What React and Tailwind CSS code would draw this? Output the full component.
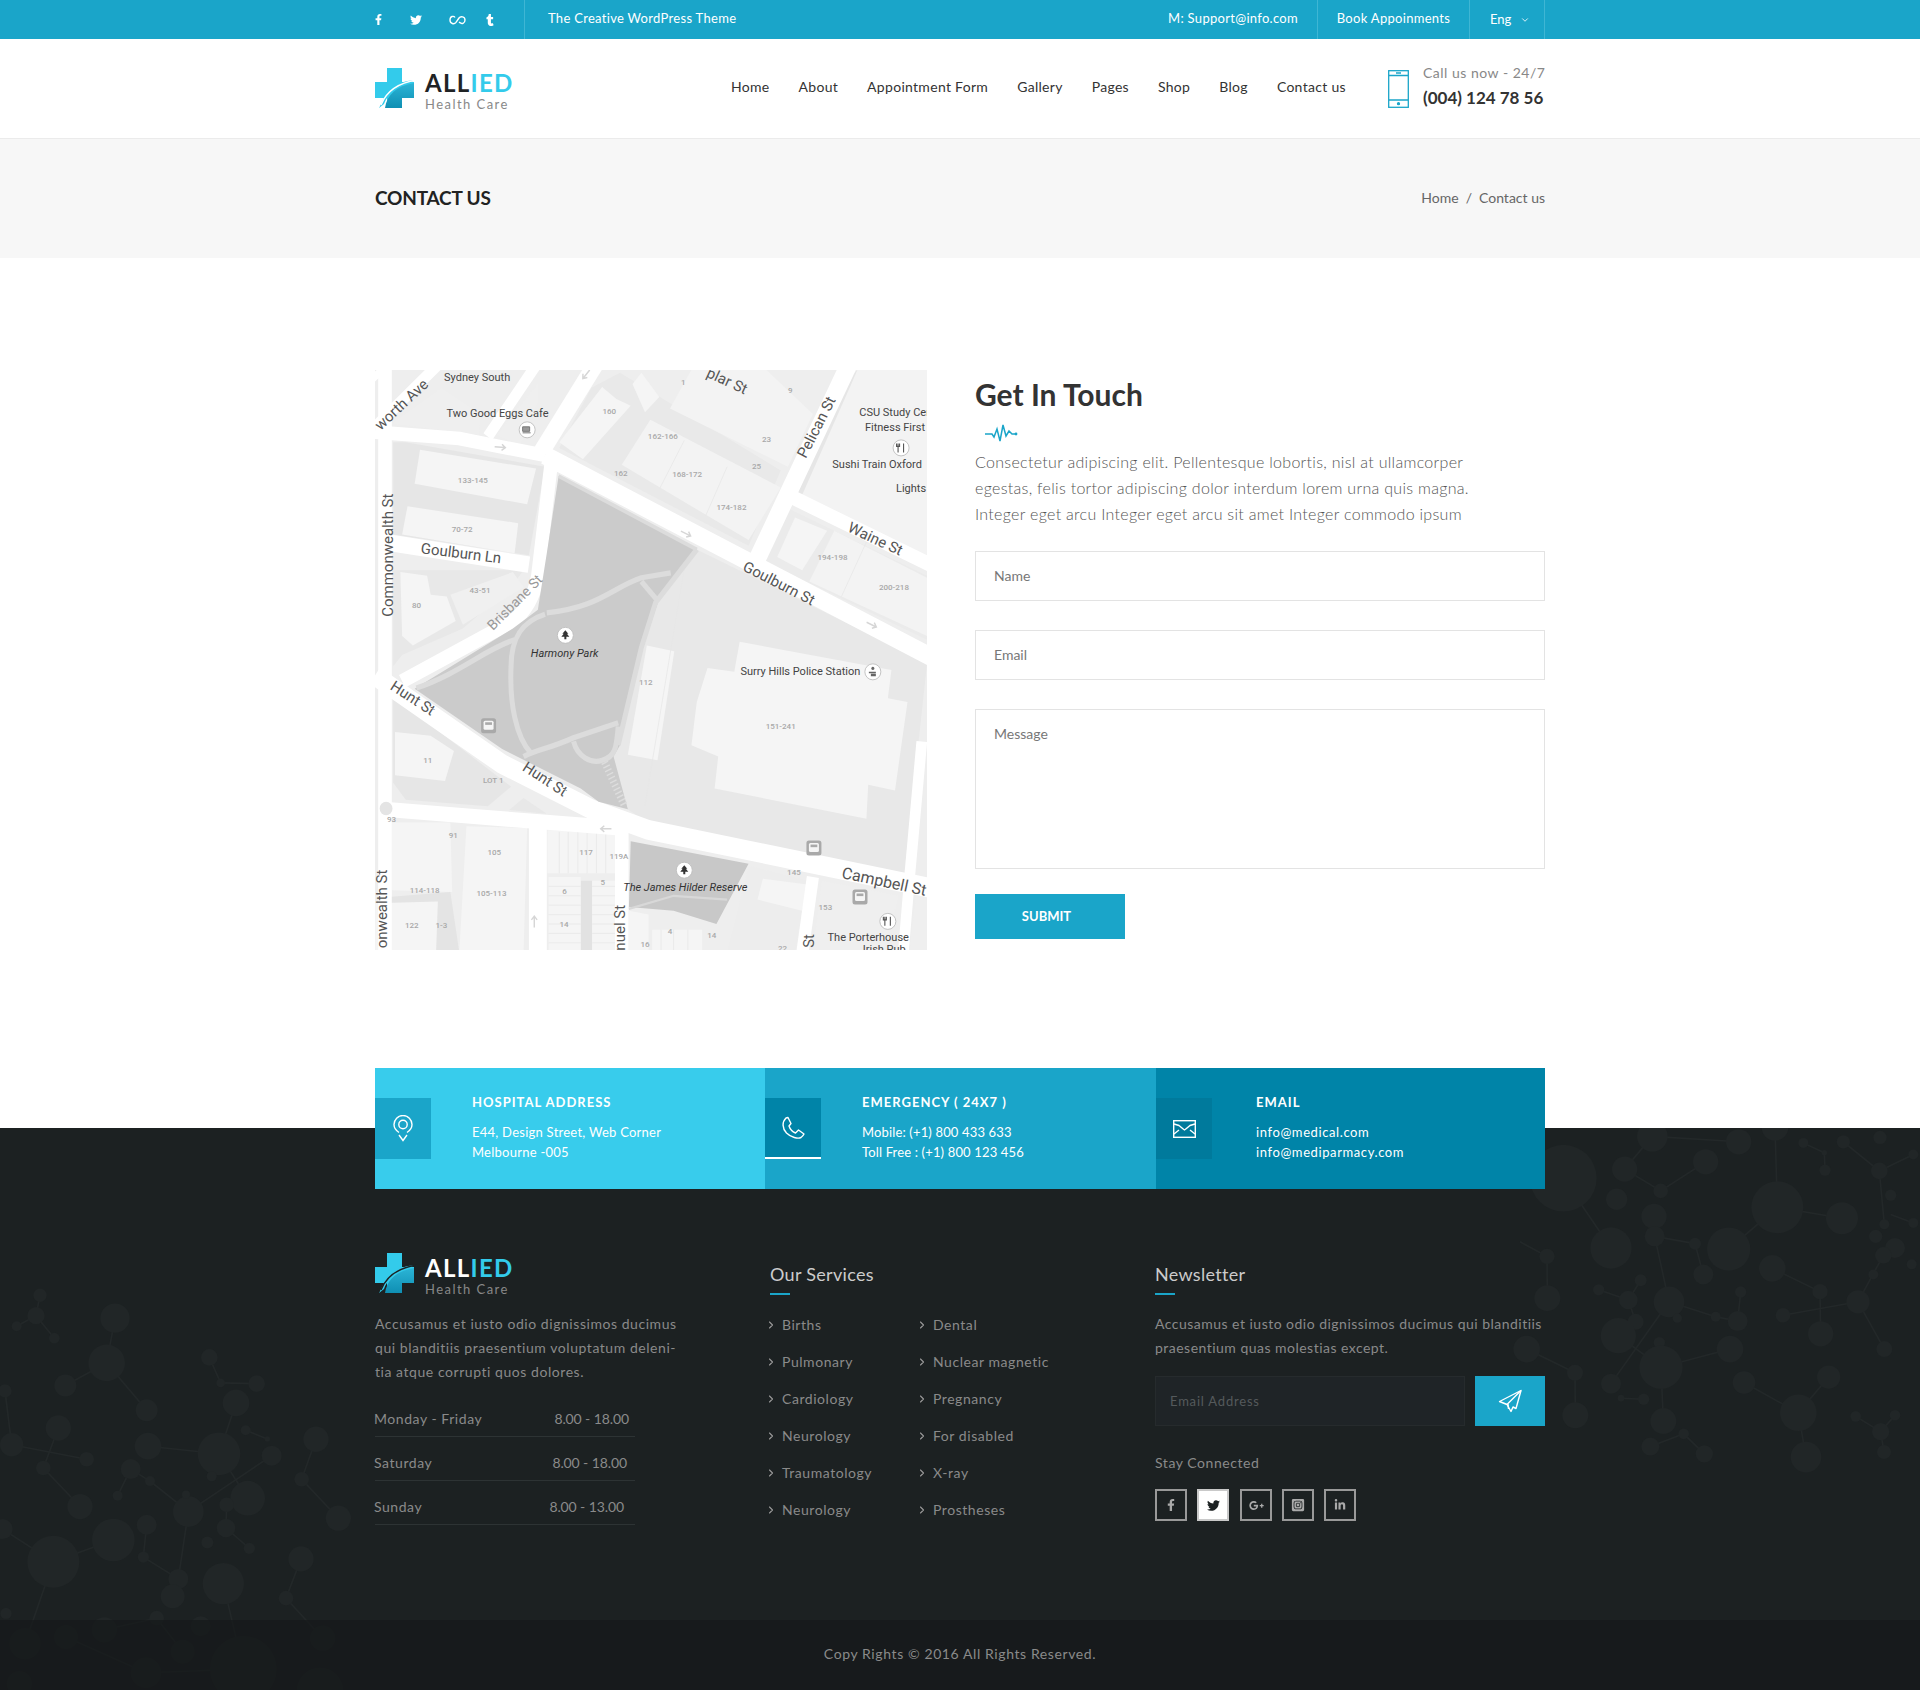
import React from "react";
import { FaFacebookF, FaTwitter, FaTumblr, FaGooglePlusG, FaInstagramSquare, FaLinkedinIn } from "react-icons/fa";
import { ChevronDown, ChevronRight } from "lucide-react";

const Logo = ({ dark }) => {
  const gap = dark ? "#1c2122" : "#ffffff";
  return (
    <div className="flex items-start">
      <svg width="42" height="40" viewBox="0 0 42 40" className="block">
        <defs>
          <linearGradient id={dark ? "lgd" : "lgl"} x1="0" y1="0" x2="0" y2="1">
            <stop offset="0" stopColor="#2bb4d6" />
            <stop offset="1" stopColor="#0f8fb3" />
          </linearGradient>
        </defs>
        <path d="M12 0H27V14H39V30H27V40H12V30H0V14H12Z" fill="#33cbeb" />
        <path d="M10 40C12 27 21 18 39 15V30H27V40Z" fill={`url(#${dark ? "lgd" : "lgl"})`} />
        <path d="M4 40C7 24 20 13 42 12C26 16 13 24 9 36L4 40Z" fill="#33cbeb" />
        <path d="M6 37C11 24 22 15 42 12" fill="none" stroke={gap} strokeWidth="1.4" />
        <path d="M0 30H9L4 40Z" fill={gap} />
      </svg>
      <div className="ml-[8px] flex flex-col">
        <div className="mt-[2px] text-[24px] leading-[26px] font-bold tracking-[1.3px]">
          <span className={dark ? "text-white" : "text-[#1f2325]"}>ALL</span>
          <span className="text-[#33cbeb]">IED</span>
        </div>
        <div className="mt-[2px] text-[13px] leading-[13px] tracking-[1.45px] text-[#888888]">Health Care</div>
      </div>
    </div>
  );
};

const LoopIcon = () => (
  <svg width="17" height="12" viewBox="0 0 17 12" fill="none" stroke="#fff" strokeWidth="1.4">
    <path d="M6 3.5C4.8 1.6 1 2 1 6s4.2 4.6 6 2.4l3-4.4c1.6-2.2 6-1.5 6 2s-3.4 4.4-5.2 2.6L10 8" />
  </svg>
);

const mx = (p) => (p - 14) / 2.8;
const my = (p) => (p - 13) / 2.657;

const labels = [
  ["Sydney South", 300, 32, 0, 11, "#444"],
  ["worth Ave", 88, 105, -43, 15, "#555"],
  ["Two Good Eggs Cafe", 357, 128, 0, 11, "#444"],
  ["plar St", 1000, 42, 25, 15, "#555"],
  ["Pelican St", 1250, 165, -63, 15, "#555"],
  ["CSU Study Center", 1510, 126, 0, 11, "#444", 0, "start"],
  ["Fitness First", 1470, 165, 0, 11, "#444"],
  ["Sushi Train Oxford", 1420, 263, 0, 11, "#444"],
  ["Lights", 1515, 328, 0, 11, "#444"],
  ["Commonwealth St", 50, 505, -90, 15, "#555"],
  ["Goulburn Ln", 255, 500, 7, 15, "#555"],
  ["Waine St", 1415, 462, 25, 15, "#555"],
  ["Goulburn St", 1145, 580, 27, 15, "#555"],
  ["Brisbane St", 405, 630, -45, 14, "#999"],
  ["Harmony Park", 545, 765, 0, 11, "#333", 1],
  ["Surry Hills Police Station", 1205, 815, 0, 11, "#444"],
  ["Hunt St", 120, 885, 33, 15, "#555"],
  ["Hunt St", 490, 1100, 33, 15, "#555"],
  ["The James Hilder Reserve", 883, 1388, 0, 11, "#333", 1],
  ["Campbell St", 1440, 1372, 12, 16, "#555"],
  ["The Porterhouse", 1395, 1522, 0, 11, "#444"],
  ["Irish Pub", 1440, 1552, 0, 11, "#444"],
  ["nuel St", 700, 1495, -90, 15, "#555"],
  ["St", 1228, 1530, -90, 15, "#555"],
  ["onwealth St", 35, 1445, -90, 15, "#555"],
];
const nums = [
  ["160",670,122],["1",877,45],["9",1177,67],["162-166",820,190],["23",1110,198],["25",1082,270],["162",702,288],["168-172",888,290],["174-182",1012,378],["133-145",288,307],["70-72",258,437],["43-51",308,600],["80",130,640],["194-198",1295,512],["200-218",1467,592],["112",772,842],["151-241",1150,960],["11",162,1050],["LOT 1",345,1103],["93",60,1208],["91",233,1250],["105",348,1295],["117",605,1295],["119A",697,1306],["5",652,1376],["6",545,1398],["114-118",153,1396],["105-113",340,1405],["122",117,1490],["1-3",200,1490],["14",543,1485],["145",1187,1348],["153",1275,1442],["4",840,1506],["14",957,1515],["16",770,1540],["22",1155,1550],
];

const roads = [
  "M14 178L250 195L490 240",
  "M490 240L1600 790",
  "M14 165L200 -10",
  "M-20 60L60 -10",
  "M330 190L465 0",
  "M480 230L630 0",
  "M42 0V1600",
  "M510 240L470 560Q455 640 400 680L90 840",
  "M40 470L445 530",
  "M14 825L370 1060L620 1180L780 1235L1600 1395",
  "M40 1180L300 1200L700 1230",
  "M705 1190V1600",
  "M470 1230V1600",
  "M1340 0L1082 520",
  "M1180 350L1600 545",
  "M1545 1000L1510 1370",
  "M1240 1360L1205 1600",
  "M1510 1370L1490 1600",
];
const roadW = [36,48,30,20,30,46,38,38,44,52,40,38,50,48,38,30,34,30];

const polys = [
  ["65,205 100,205 490,270 445,505 65,450", "#e6e6e6"],
  ["65,880 395,1120 330,1172 100,1155 65,1110", "#e6e6e6"],
  ["915,490 1560,790 1495,1360 780,1215 720,1180 680,1040 800,640", "#e8e8e8"],
  ["65,545 430,545 395,590 260,700 90,770 65,800", "#e8e8e8"],
  ["590,1370 622,1370 622,1560 590,1560", "#e2e2e2"],
  ["25,1415 225,1400 250,1560 20,1560", "#e4e4e4"],
  ["530,220 620,60 700,20 1150,280 1060,480", "#e9e9e9"],
  ["1170,380 1560,560 1560,730 1100,520", "#ebebeb"],
  ["1325,50 1365,13 1220,350 1198,340", "#e6e6e6"],
  ["530,205 650,58 690,90 730,108 596,250", "#f5f5f5"],
  ["735,50 760,20 810,85 770,125", "#f5f5f5"],
  ["840,115 900,13 1110,13 1240,130 1170,270", "#f3f3f3"],
  ["785,145 1150,325 1060,465 705,265", "#f3f3f3"],
  ["60,155 200,60 310,130 305,185", "#efefef"],
  ["355,185 470,50 470,100 420,215", "#efefef"],
  ["140,225 465,275 440,370 125,315", "#f5f5f5"],
  ["105,375 415,420 405,500 90,450", "#f5f5f5"],
  ["85,550 160,560 170,610 215,615 240,680 120,745 90,720", "#f5f5f5"],
  ["225,610 400,550 430,590 260,690", "#f0f0f0"],
  ["1365,13 1560,13 1560,520 1210,345", "#f3f3f3"],
  ["1190,405 1280,440 1210,545 1140,510", "#f5f5f5"],
  ["1300,440 1560,565 1560,720 1230,575", "#f3f3f3"],
  ["775,745 852,760 805,1050 722,1035", "#f5f5f5"],
  ["1035,735 1460,810 1450,885 1505,895 1470,1130 1395,1115 1390,1205 965,1125 975,1040 900,1010 915,895 945,805 1020,815", "#f5f5f5"],
  ["70,975 170,985 235,1025 210,1105 70,1090", "#f5f5f5"],
  ["60,1215 225,1215 230,1400 60,1395", "#f5f5f5"],
  ["270,1225 440,1230 430,1560 250,1560", "#f5f5f5"],
  ["15,1430 190,1425 185,1560 15,1560", "#f5f5f5"],
  ["497,1235 688,1245 688,1350 497,1350", "#f5f5f5"],
  ["500,1360 590,1360 590,1560 500,1560", "#f5f5f5"],
  ["622,1370 688,1370 688,1560 622,1560", "#f5f5f5"],
  ["725,1450 780,1460 780,1560 725,1560", "#f5f5f5"],
  ["790,1500 930,1500 930,1560 790,1560", "#f5f5f5"],
  ["1060,1330 1225,1370 1190,1560 1000,1560", "#ededed"],
  ["1100,1365 1225,1380 1210,1450 1085,1420", "#f5f5f5"],
  ["1265,1370 1480,1410 1440,1560 1240,1560", "#efefef"],
  ["1530,1400 1560,1400 1560,1560 1510,1560", "#efefef"],
];

const rowLines = [1385, 1410, 1435, 1460, 1485, 1510, 1535];
const colLines = [530, 555, 582, 608, 634, 660];
const arrows = [[365, 218, 5], [885, 448, 25], [1405, 690, 25], [660, 1232, 180], [460, 1478, -90], [605, 25, 130]];

const Pin = ({ p, y, kind }) => {
  const cx = mx(p), cy = my(y);
  if (kind === "bus") {
    return (
      <g>
        <rect x={cx - 7.5} y={cy - 7.5} width="15" height="15" rx="2.5" fill="#a9a9a9" />
        <rect x={cx - 5} y={cy - 5} width="10" height="9" rx="1.5" fill="#f5f5f5" />
        <rect x={cx - 3.4} y={cy - 3.4} width="6.8" height="2.6" fill="#a9a9a9" />
      </g>
    );
  }
  return (
    <g>
      <circle cx={cx} cy={cy} r="8" fill="#ffffff" stroke="#bdbdbd" strokeWidth=".9" />
      {kind === "tree" && <path d={`M${cx} ${cy - 5}l3 3.5h-1.4l2.4 3h-3v2.5h-2v-2.5h-3l2.4-3H${cx - 3}z`} fill="#333" />}
      {kind === "fork" && <path d={`M${cx - 3} ${cy - 4.5}v9M${cx - 4.5} ${cy - 4.5}v3h3v-3M${cx + 2.5} ${cy - 4.5}v9`} stroke="#555" strokeWidth="1.1" fill="none" />}
      {kind === "cup" && <path d={`M${cx - 4.5} ${cy - 3}h7v4.5h-7zM${cx - 4.5} ${cy + 3}h8`} stroke="#777" strokeWidth="1" fill="#999" />}
      {kind === "police" && <path d={`M${cx} ${cy - 5}a1.6 1.6 0 1 1-.01 0M${cx - 4} ${cy}h7v1.5h-7zM${cx - 2} ${cy + 2}h5v2.5h-5z`} fill="#666" />}
    </g>
  );
};

const MapPic = () => (
  <svg width="552" height="580" viewBox="0 0 552 580" className="block h-[580px] w-[552px] shrink-0" fontFamily="Roboto, sans-serif">
    <rect width="552" height="580" fill="#eeeeee" />
    <g transform={`scale(${1 / 2.8} ${1 / 2.657}) translate(-14 -13)`}>
      {polys.map(([pts, f], i) => <polygon key={i} points={pts} fill={f} />)}
      <g stroke="#e6e6e6" strokeWidth="2">
        {rowLines.map((y) => <path key={y} d={`M500 ${y}H590M622 ${y}H688`} />)}
        {colLines.map((x) => <path key={x} d={`M${x} 1240V1350`} />)}
        <path d="M1000 270L940 400M880 200L810 330M1390 470L1320 615M880 540L770 1170M815 1500V1560M850 1500V1560M890 1500V1560" />
      </g>
      {roads.map((d, i) => <path key={i} d={d} fill="none" stroke="#ffffff" strokeWidth={roadW[i]} />)}
      <circle cx="45" cy="1178" r="18" fill="#e4e4e4" />
      <polygon points="430,1150 495,1192 390,1182" fill="#e8e8e8" />
      <polygon points="528,295 915,490 810,620 760,760 700,1010 682,1040 722,1180 640,1160 590,1125 370,1020 125,860 400,700 470,650 495,500" fill="#cbcbcb" />
      <polygon points="730,1265 1060,1325 970,1485 850,1450 725,1440" fill="#c8c8c8" />
      <path d="M725 1445L850 1410L1000 1420" fill="none" stroke="#d8d8d8" strokeWidth="6" />
      <g fill="none" stroke="#dcdcdc" strokeWidth="14">
        <path d="M495 658C640 645 680 590 760 565L842 552" />
        <path d="M760 575L802 622" />
        <path d="M130 858C250 820 330 750 405 730" />
        <path d="M490 662C430 680 395 720 395 800C390 900 410 990 450 1030" />
        <path d="M430 1040C470 1020 500 1020 570 990L695 950" />
        <path d="M570 1000C580 1040 620 1060 650 1050C690 1040 690 1010 695 960" />
        <path d="M915 490L800 630L760 750L695 1010" />
        <path d="M528 295L915 490" strokeWidth="10" />
      </g>
      <path d="M652 1045L712 1170" stroke="#dddddd" strokeWidth="20" strokeDasharray="4 7" fill="none" />
      {arrows.map(([x, y, r], i) => (
        <path key={i} transform={`translate(${x} ${y}) rotate(${r})`} d="M-16 0H12M4 -8L14 0L4 8" fill="none" stroke="#d6d6d6" strokeWidth="4" />
      ))}
    </g>
    {nums.map(([t, x, y], i) => (
      <text key={i} x={mx(x)} y={my(y)} fontSize="8" fontWeight="500" fill="#a8a8a8" textAnchor="middle" dominantBaseline="central">{t}</text>
    ))}
    {labels.map(([t, x, y, r, s, c, it, anchor], i) => (
      <text
        key={i}
        x={anchor ? mx(1370) : mx(x)}
        y={my(y)}
        fontSize={s}
        fill={c}
        fontStyle={it ? "italic" : "normal"}
        textAnchor={anchor || "middle"}
        dominantBaseline="central"
        transform={r ? `rotate(${r} ${mx(x)} ${my(y)})` : undefined}
      >{t}</text>
    ))}
    <Pin p={440} y={172} kind="cup" />
    <Pin p={1487} y={220} kind="fork" />
    <Pin p={547} y={718} kind="tree" />
    <Pin p={1408} y={815} kind="police" />
    <Pin p={332} y={958} kind="bus" />
    <Pin p={1243} y={1283} kind="bus" />
    <Pin p={1372} y={1413} kind="bus" />
    <Pin p={880} y={1342} kind="tree" />
    <Pin p={1450} y={1478} kind="fork" />
  </svg>
);

const molL = [[120,482,20],[108,538,26],[50,567,15],[163,600,16],[345,545,44],[320,668,55],[196,730,33],[440,798,33],[15,745,20],[628,653,25],[662,723,13],[770,725,25],[708,778,40],[175,847,38],[35,893,35],[260,933,22],[130,957,22],[444,897,40],[657,918,64],[392,960,30],[450,993,15],[815,923,30],[737,853,15],[802,877,8],[948,878,38],[905,988,22],[1015,1095,38],[743,1040,52],[635,980,15],[240,1063,38],[353,1033,15],[565,1077,46],[558,1030,12],[680,1058,22],[678,1122,28],[440,1113,30],[340,1155,64],[160,1215,78],[8,1125,30],[430,1202,17],[622,1162,18],[748,1178,17],[535,1262,30],[518,1310,36],[670,1275,62],[903,1207,38],[858,1315,22],[968,1425,38],[18,1357,17],[75,1440,47],[198,1422,36],[313,1402,38],[470,1370,22],[602,1392,30],[548,1462,36],[438,1520,46],[730,1510,100],[58,1550,38],[960,1570,70]];
const linL = [[108,538,50,567],[108,538,120,482],[108,538,163,600],[345,545,320,668],[320,668,196,730],[320,668,440,798],[628,653,662,723],[662,723,770,725],[708,778,657,918],[175,847,130,957],[35,893,260,933],[15,745,35,893],[444,897,657,918],[392,960,450,993],[450,993,565,1077],[353,1033,392,960],[657,918,743,1040],[815,923,565,1077],[737,853,802,877],[948,878,905,988],[905,988,1015,1095],[130,957,240,1063],[565,1077,535,1262],[680,1058,678,1122],[678,1122,748,1178],[440,1113,430,1202],[430,1202,535,1262],[340,1155,160,1215],[160,1215,8,1125],[160,1215,75,1440],[903,1207,858,1315],[858,1315,968,1425],[198,1422,438,1520],[313,1402,470,1370],[470,1370,548,1462],[670,1275,730,1510],[438,1520,730,1510]];
const molR = [[130,160,100],[273,352,62],[397,45,46],[314,135,38],[290,218,32],[422,195,22],[557,115,38],[656,60,38],[402,265,38],[404,320,30],[525,340,18],[550,425,30],[626,355,65],[772,240,78],[966,270,48],[765,20,40],[850,63,15],[913,90,8],[915,138,17],[970,60,20],[1080,48,20],[1078,140,25],[1180,95,15],[1112,207,17],[1093,287,15],[1180,283,15],[1067,320,20],[1125,352,30],[1090,372,25],[1175,397,15],[1060,425,15],[757,408,40],[900,472,23],[1014,500,35],[902,588,38],[789,537,22],[662,473,17],[653,553,30],[587,541,15],[447,500,46],[472,545,14],[362,441,18],[325,495,28],[236,467,17],[347,555,24],[295,593,53],[418,612,17],[423,680,65],[630,630,40],[273,725,30],[303,765,10],[371,768,17],[430,828,39],[491,863,16],[391,898,27],[553,918,26],[672,722,34],[835,805,55],[926,707,35],[858,927,46],[1007,815,16],[1082,857,26],[1125,812,16],[1092,913,21],[1093,630,24],[81,375,23],[82,490,39],[20,630,40],[165,695,24],[166,812,39]];
const linR = [[130,160,273,352],[397,45,314,135],[314,135,422,195],[422,195,557,115],[397,45,656,60],[404,320,525,340],[525,340,550,425],[626,355,772,240],[772,240,966,270],[772,240,765,20],[850,63,913,90],[913,90,915,138],[1078,140,970,60],[1078,140,1180,95],[1078,140,1093,287],[1112,260,1180,283],[404,320,447,500],[0,335,81,375],[81,375,82,490],[20,630,165,695],[165,695,166,812],[757,408,900,472],[900,472,902,588],[789,537,1014,500],[1014,500,1093,630],[1014,500,1090,372],[447,500,587,541],[587,541,653,553],[653,553,662,473],[325,495,236,467],[325,495,362,441],[325,495,347,555],[447,500,273,725],[295,593,423,680],[423,680,630,630],[423,680,430,828],[303,765,371,768],[391,898,491,863],[491,863,553,918],[672,722,835,805],[835,805,926,707],[835,805,858,927],[1007,815,1082,857],[1082,857,1125,812],[1082,857,1092,913]];

const Molecules = () => {
  const fy = (p) => p / 2.75 - 8;
  const Lx = (p) => p / 3;
  const Rx = (p) => 1520 + p / 3;
  return (
    <svg className="absolute left-0 top-0" width="1920" height="562" viewBox="0 0 1920 562">
      <g stroke="#232829" strokeWidth="1.6">
        {linL.map((l, i) => <line key={i} x1={Lx(l[0])} y1={fy(l[1])} x2={Lx(l[2])} y2={fy(l[3])} />)}
        {linR.map((l, i) => <line key={i} x1={Rx(l[0])} y1={fy(l[1])} x2={Rx(l[2])} y2={fy(l[3])} />)}
      </g>
      <g fill="#212627">
        {molL.map((c, i) => <circle key={i} cx={Lx(c[0])} cy={fy(c[1])} r={c[2] / 3} />)}
        {molR.map((c, i) => <circle key={i} cx={Rx(c[0])} cy={fy(c[1])} r={c[2] / 3} />)}
      </g>
    </svg>
  );
};

const services = [
  ["Births", "Dental"],
  ["Pulmonary", "Nuclear magnetic"],
  ["Cardiology", "Pregnancy"],
  ["Neurology", "For disabled"],
  ["Traumatology", "X-ray"],
  ["Neurology", "Prostheses"],
];

const Service = ({ t, w }) => (
  <div className={`flex items-center ${w}`}>
    <ChevronRight size={12} strokeWidth={2.2} className="mr-[4px] -ml-[5px] text-[#9a9a9a]" />
    <span className="ml-[1px]">{t}</span>
  </div>
);

const Info = ({ bg, box, title, lines, textX, icon, active, width, lineTrack }) => (
  <div className={`flex h-[121px] ${bg} ${width}`}>
    <div className={`mt-[30px] flex h-[61px] w-[56px] items-center justify-center ${box} ${active ? "border-b-2 border-white" : ""}`}>{icon}</div>
    <div className={`${textX} pt-[25px] text-white`}>
      <div className="text-[13px] leading-[18px] font-bold tracking-[1px] uppercase">{title}</div>
      <div className={`mt-[12px] text-[13px] leading-[19.5px] ${lineTrack}`}>
        {lines.map((l) => <div key={l}>{l}</div>)}
      </div>
    </div>
  </div>
);

const Social = ({ children, active }) => (
  <div className={`flex h-[32px] w-[32px] items-center justify-center border-2 ${active ? "border-[#c9c9c9] bg-white text-[#1c2122]" : "border-[#999999] text-[#aaaaaa]"}`}>{children}</div>
);

export default function App() {
  return (
    <div className="w-[1920px] bg-white font-['Lato','Open_Sans',sans-serif] text-[#333333]">
      {/* top bar */}
      <div className="h-[39px] bg-[#1aa5c9] text-white">
        <div className="mx-auto flex h-full w-[1170px] items-stretch text-[13px]">
          <div className="flex w-[150px] items-center border-r border-[#3fb6d4]">
            <FaFacebookF size={11} className="-ml-[2px]" />
            <FaTwitter size={12} className="ml-[26px]" />
            <span className="ml-[27px]"><LoopIcon /></span>
            <FaTumblr size={12} className="ml-[18px]" />
          </div>
          <div className="ml-[23px] flex items-center pb-[2px] tracking-[0.3px]">The Creative WordPress Theme</div>
          <div className="ml-auto flex items-stretch">
            <div className="flex items-center border-r border-[#3fb6d4] pr-[19px] pb-[2px] tracking-[0.3px]">M: Support@info.com</div>
            <div className="flex w-[152px] items-center justify-center border-r border-[#3fb6d4] pb-[2px] tracking-[0.3px]">Book Appoinments</div>
            <div className="flex w-[75px] items-center border-r border-[#3fb6d4] pl-[20px]">
              <span>Eng</span>
              <ChevronDown size={10} className="ml-[9px]" />
            </div>
          </div>
        </div>
      </div>
      {/* header */}
      <div className="h-[100px] border-b border-[#ebebeb]">
        <div className="mx-auto flex h-full w-[1170px] items-start">
          <div className="mt-[29px] w-[356px] shrink-0"><Logo /></div>
          <nav className="mt-[39px] flex shrink-0 gap-[29px] text-[14px] leading-[18px] tracking-[0.3px] whitespace-nowrap text-[#333333]">
            {["Home", "About", "Appointment Form", "Gallery", "Pages", "Shop", "Blog", "Contact us"].map((n) => <span key={n}>{n}</span>)}
          </nav>
          <div className="ml-auto flex shrink-0 items-start whitespace-nowrap">
            <svg width="21" height="38" viewBox="0 0 21 38" fill="none" stroke="#1aa5c9" strokeWidth="1.3" className="mt-[31px]">
              <rect x=".7" y=".7" width="19.6" height="36.6" />
              <path d="M1 5.5H20M1 30H20" />
              <path d="M8 3H13" strokeWidth="1.5" />
              <circle cx="10.5" cy="33.7" r="1" fill="#1aa5c9" />
            </svg>
            <div className="ml-[14px] w-[122px] pt-[25px]">
              <div className="text-[14px] leading-[18px] tracking-[0.5px] text-[#888888]">Call us now - 24/7</div>
              <div className="mt-[5px] text-[17px] leading-[22px] font-bold text-[#333333]">(004) 124 78 56</div>
            </div>
          </div>
        </div>
      </div>
      {/* title */}
      <div className="h-[119px] bg-[#f7f7f7]">
        <div className="mx-auto flex h-full w-[1170px] items-center justify-between pb-[2px]">
          <h1 className="mt-[2px] text-[19px] font-bold tracking-[-0.2px] text-[#222222]">CONTACT US</h1>
          <div className="text-[14px] tracking-[0px] text-[#666666]">Home<span className="mx-[7px]">/</span>Contact us</div>
        </div>
      </div>
      {/* contact */}
      <div className="mx-auto flex w-[1170px] pt-[112px] pb-[118px]">
        <MapPic />
        <div className="ml-[48px] w-[570px]">
          <h2 className="mt-[6px] text-[30px] leading-[36px] font-bold text-[#333333]">Get In Touch</h2>
          <svg width="34" height="18" viewBox="0 0 34 18" fill="none" stroke="#1aa5c9" strokeWidth="1.5" className="mt-[12px] ml-[10px] block">
            <path d="M0 10H7L9 13L12 5L15 17L18 1L21 12L24 7L27 10H31" />
            <circle cx="31" cy="10" r="1.4" fill="#1aa5c9" stroke="none" />
          </svg>
          <p className="mt-[7px] text-[16px] leading-[26px] font-light tracking-[0.3px] whitespace-nowrap text-[#555555]">
            Consectetur adipiscing elit. Pellentesque lobortis, nisl at ullamcorper<br />
            egestas, felis tortor adipiscing dolor interdum lorem urna quis magna.<br />
            Integer eget arcu Integer eget arcu sit amet Integer commodo ipsum
          </p>
          <input placeholder="Name" className="mt-[24px] block h-[50px] w-[570px] border border-[#e3e3e3] px-[18px] pb-[2px] text-[14px] outline-none placeholder:text-[#777777]" />
          <input placeholder="Email" className="mt-[29px] block h-[50px] w-[570px] border border-[#e3e3e3] px-[18px] pb-[2px] text-[14px] outline-none placeholder:text-[#777777]" />
          <textarea placeholder="Message" className="mt-[29px] block h-[160px] w-[570px] resize-none border border-[#e3e3e3] px-[18px] pt-[14px] text-[14px] leading-[20px] outline-none placeholder:text-[#777777]" />
          <button className="mt-[25px] block h-[45px] w-[150px] bg-[#1aa5c9] pr-[7px] text-[13px] font-bold tracking-[0px] text-white">SUBMIT</button>
        </div>
      </div>
      {/* info strip */}
      <div className="relative z-10 mx-auto -mb-[61px] flex w-[1170px]">
        <Info
          width="w-[390px]" bg="bg-[#38ccec]" box="bg-[#1aa5c9]" textX="ml-[41px]" lineTrack="tracking-[0.25px]"
          title="Hospital Address" lines={["E44, Design Street, Web Corner", "Melbourne -005"]}
          icon={<svg width="20" height="27" viewBox="0 0 20 27" fill="none" stroke="#fff" strokeWidth="1.4"><path d="M6 17.5C3 15.5 1 13 1 9.5a9 9 0 0 1 18 0c0 3.5-2 6-5 8" /><circle cx="10" cy="9.5" r="4.2" /><path d="M6 20l4 5.5 4-5.5" /></svg>}
        />
        <Info
          width="w-[391px]" bg="bg-[#1aa5c9]" box="bg-[#0084a8]" textX="ml-[41px]" active lineTrack="tracking-[0.15px]"
          title="Emergency ( 24x7 )" lines={["Mobile: (+1) 800 433 633", "Toll Free : (+1) 800 123 456"]}
          icon={<svg width="24" height="24" viewBox="0 0 24 24" fill="none" stroke="#fff" strokeWidth="1.4"><path d="M5 2C1 6 1 12 5.5 17C10 21.5 17 23 20 21.5C21.5 20.5 22.5 19 23 18L17.5 14L14.5 17C12 16 9 13 8 10L10 7.5L7 1.5Z" strokeLinejoin="round" /></svg>}
        />
        <Info
          width="w-[389px]" bg="bg-[#0084a8]" box="bg-[#007a9c]" textX="ml-[44px]" lineTrack="tracking-[0.6px]"
          title="Email" lines={["info@medical.com", "info@mediparmacy.com"]}
          icon={<svg width="23" height="18" viewBox="0 0 23 18" fill="none" stroke="#fff" strokeWidth="1.4"><rect x=".7" y=".7" width="21.6" height="16.6" /><path d="M1 4L6 5.5C8 7 9 8.5 11.5 10C14 8.5 15 7 17 5.5L22 4M1 14L6 10M22 14L17 10" /></svg>}
        />
      </div>
      {/* footer */}
      <footer className="relative h-[562px] overflow-hidden bg-[#1c2122] text-[14px] tracking-[0.55px] text-[#8a8a8a]">
        <Molecules />
        <div className="relative mx-auto flex h-[492px] w-[1170px] pt-[125px]">
          <div className="w-[395px]">
            <Logo dark />
            <p className="mt-[16px] w-[320px] leading-[24px] whitespace-nowrap">
              Accusamus et iusto odio dignissimos ducimus<br />
              qui blanditiis praesentium voluptatum deleni-<br />
              tia atque corrupti quos dolores.
            </p>
            <div className="mt-[9px] w-[260px]">
              {[["Monday - Friday", "8.00 - 18.00", "pr-[6px]"], ["Saturday", "8.00 - 18.00", "pr-[8px]"], ["Sunday", "8.00 - 13.00", "pr-[11px]"]].map(([a, b, p]) => (
                <div key={a} className={`flex h-[44px] items-start justify-between border-b border-[#2d3334] pt-[14px] leading-[24px] ${p}`}>
                  <span className="-ml-[1px]">{a}</span><span className="tracking-[-0.1px]">{b}</span>
                </div>
              ))}
            </div>
          </div>
          <div className="w-[385px]">
            <h3 className="mt-[9px] text-[18px] leading-[24px] tracking-[0.3px] text-[#cccccc]">Our Services</h3>
            <div className="mt-[7px] h-[2px] w-[20px] bg-[#1aa5c9]" />
            <div className="mt-[11px]">
              {services.map(([a, b], i) => (
                <div key={i} className="flex h-[37px] items-center">
                  <Service t={a} w="w-[151px]" />
                  <Service t={b} />
                </div>
              ))}
            </div>
          </div>
          <div className="w-[390px]">
            <h3 className="mt-[9px] text-[18px] leading-[24px] tracking-[0.3px] text-[#cccccc]">Newsletter</h3>
            <div className="mt-[7px] h-[2px] w-[20px] bg-[#1aa5c9]" />
            <p className="mt-[17px] leading-[24px] tracking-[0.48px] whitespace-nowrap">
              Accusamus et iusto odio dignissimos ducimus qui blanditiis<br />
              praesentium quas molestias except.
            </p>
            <div className="mt-[16px] flex gap-[10px]">
              <input placeholder="Email Address" className="h-[50px] w-[310px] border border-[#262b2d] bg-[#1f2427] px-[14px] text-[13px] tracking-[0.8px] outline-none placeholder:text-[#555a5c]" />
              <div className="flex h-[50px] w-[70px] items-center justify-center bg-[#1aa5c9]">
                <svg width="24" height="24" viewBox="0 0 24 24" fill="none" stroke="#fff" strokeWidth="1.4" strokeLinejoin="round"><path d="M23 1.5L1.5 12.5L9 15.5L13 22.5L15 18L18 19.5Z" /><path d="M23 1.5L9 15.5M10 15L10.5 20" /></svg>
              </div>
            </div>
            <div className="mt-[25px] leading-[24px]">Stay Connected</div>
            <div className="mt-[14px] flex gap-[10px]">
              <Social><FaFacebookF size={12} /></Social>
              <Social active><FaTwitter size={13} /></Social>
              <div className="ml-[1px]"><Social><FaGooglePlusG size={15} /></Social></div>
              <Social><FaInstagramSquare size={14} /></Social>
              <Social><FaLinkedinIn size={12} /></Social>
            </div>
          </div>
        </div>
        <div className="relative flex h-[70px] items-center justify-center bg-[#15181a]/70 pb-[4px] tracking-[0.6px]">Copy Rights © 2016 All Rights Reserved.</div>
      </footer>
    </div>
  );
}
